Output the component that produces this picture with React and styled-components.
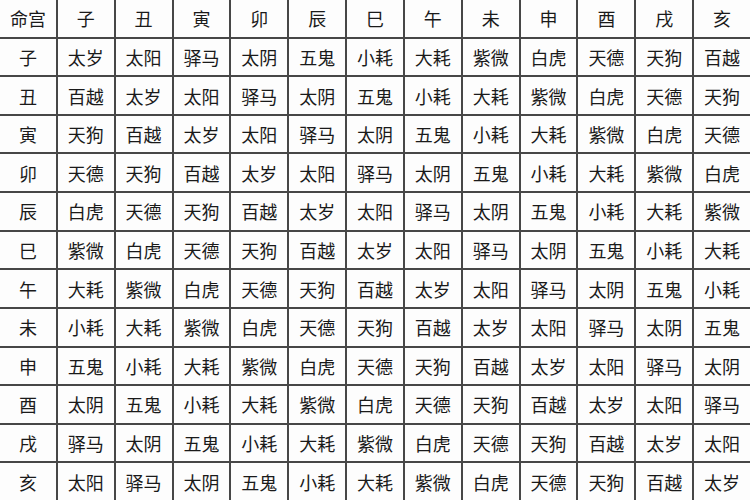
import styled, { createGlobalStyle } from 'styled-components';

const GlobalStyle = createGlobalStyle`
  html, body {
    margin: 0;
    padding: 0;
    background: #ffffff;
  }
`;

const Board = styled.div`
  width: 750px;
  height: 500px;
  overflow: hidden;
  display: grid;
  grid-template-columns: repeat(13, 1fr);
  grid-template-rows: repeat(13, 1fr);
  gap: 2px;
  background: #474747;
  font-family: "Noto Sans CJK SC", "Noto Sans", sans-serif;
`;

const Cell = styled.div`
  background: #fdfdfd;
  display: flex;
  align-items: center;
  justify-content: center;
  font-size: 18px;
  color: #1a1a1a;
  white-space: nowrap;
`;

const branches = ['子', '丑', '寅', '卯', '辰', '巳', '午', '未', '申', '酉', '戌', '亥'];
const stars = ['太岁', '太阳', '驿马', '太阴', '五鬼', '小耗', '大耗', '紫微', '白虎', '天德', '天狗', '百越'];

export default function App() {
  return (
    <>
      <GlobalStyle />
      <Board>
        <Cell>命宫</Cell>
        {branches.map(b => <Cell key={'h' + b}>{b}</Cell>)}
        {branches.map((b, i) => [
          <Cell key={'r' + b}>{b}</Cell>,
          ...branches.map((_, j) => (
            <Cell key={b + j}>{stars[(j - i + 12) % 12]}</Cell>
          ))
        ])}
      </Board>
    </>
  );
}
